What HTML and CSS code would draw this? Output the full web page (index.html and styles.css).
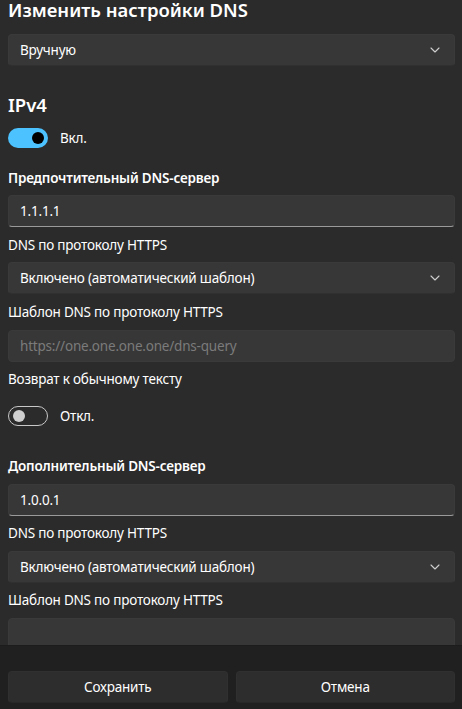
FILE: index.html
```html
<!DOCTYPE html>
<html lang="ru">
<head>
<meta charset="utf-8">
<title>Изменить настройки DNS</title>
<link rel="stylesheet" href="styles.css">
</head>
<body>
<div class="dialog">
  <main class="content">
    <h1 class="title">Изменить настройки DNS</h1>
    <div class="select first">
      <span>Вручную</span>
      <svg class="chev" width="10" height="6" viewBox="0 0 10 6"><path d="M1 1l4 4 4-4" fill="none" stroke="#cfcfcf" stroke-width="1.1" stroke-linecap="round" stroke-linejoin="round"/></svg>
    </div>

    <h2 class="section">IPv4</h2>
    <div class="toggle-row on-row">
      <span class="toggle on"><span class="knob"></span></span>
      <span class="toggle-text">Вкл.</span>
    </div>

    <div class="label bold first-label">Предпочтительный DNS-сервер</div>
    <div class="input m7"><span>1.1.1.1</span></div>

    <div class="label m8">DNS по протоколу HTTPS</div>
    <div class="select m7">
      <span>Включено (автоматический шаблон)</span>
      <svg class="chev" width="10" height="6" viewBox="0 0 10 6"><path d="M1 1l4 4 4-4" fill="none" stroke="#cfcfcf" stroke-width="1.1" stroke-linecap="round" stroke-linejoin="round"/></svg>
    </div>

    <div class="label m8">Шаблон DNS по протоколу HTTPS</div>
    <div class="input plain m8"><span class="placeholder">https://one.one.one.one/dns-query</span></div>

    <div class="label m7">Возврат к обычному тексту</div>
    <div class="toggle-row off-row">
      <span class="toggle off"><span class="knob"></span></span>
      <span class="toggle-text">Откл.</span>
    </div>

    <div class="label bold second-label">Дополнительный DNS-сервер</div>
    <div class="input m8"><span>1.0.0.1</span></div>

    <div class="label m7">DNS по протоколу HTTPS</div>
    <div class="select m8">
      <span>Включено (автоматический шаблон)</span>
      <svg class="chev" width="10" height="6" viewBox="0 0 10 6"><path d="M1 1l4 4 4-4" fill="none" stroke="#cfcfcf" stroke-width="1.1" stroke-linecap="round" stroke-linejoin="round"/></svg>
    </div>

    <div class="label m7">Шаблон DNS по протоколу HTTPS</div>
    <div class="input plain m8"></div>
  </main>
  <footer class="footer">
    <button class="btn">Сохранить</button>
    <button class="btn">Отмена</button>
  </footer>
</div>
</body>
</html>
```
FILE: styles.css
```css
* { box-sizing: border-box; }
html, body {
  margin: 0;
  padding: 0;
  background: #2b2b2b;
}
body {
  font-family: "Noto Sans", "Open Sans", sans-serif;
  font-size: 13.5px;
  letter-spacing: -0.2px;
  color: #ffffff;
  width: 462px;
  height: 709px;
  overflow: hidden;
}
.dialog {
  display: flex;
  flex-direction: column;
  height: 709px;
}
.content {
  height: 645px;
  overflow: hidden;
  padding: 0 7px 0 8px;
  display: flex;
  flex-direction: column;
  flex: none;
}
.title {
  margin: 0;
  font-size: 18.5px;
  font-weight: 600;
  line-height: 20px;
  letter-spacing: 0;
}
.select {
  height: 32px;
  background: #373737;
  border: 1px solid #3a3a3a;
  border-bottom-color: #303030;
  border-radius: 4px;
  display: flex;
  align-items: center;
  justify-content: space-between;
  padding: 0 14px 0 11px;
  flex: none;
}
.select.first { margin-top: 14px; }
.chev { display: block; }
.section {
  margin: 25px 0 0;
  font-size: 18.5px;
  font-weight: 600;
  line-height: 28px;
  letter-spacing: 0;
}
.toggle-row {
  display: flex;
  align-items: center;
  gap: 12px;
  height: 20px;
  flex: none;
}
.on-row { margin-top: 9px; }
.off-row { margin-top: 17px; }
.toggle {
  width: 40px;
  height: 20px;
  border-radius: 10px;
  display: flex;
  align-items: center;
  flex: none;
}
.toggle.on {
  background: #4cc2ff;
  justify-content: flex-end;
  padding-right: 4px;
}
.toggle.on .knob {
  width: 12px;
  height: 12px;
  border-radius: 50%;
  background: #000;
}
.toggle.off {
  border: 1px solid #c8c8c8;
  padding-left: 4px;
}
.toggle.off .knob {
  width: 12px;
  height: 12px;
  border-radius: 50%;
  background: #cfcfcf;
}
.label {
  line-height: 20px;
  flex: none;
}
.label.bold { font-weight: 600; }
.first-label { margin-top: 20px; }
.second-label { margin-top: 30px; }
.m7 { margin-top: 7px; }
.m8 { margin-top: 8px; }
.input {
  height: 32px;
  background: #373737;
  border: 1px solid #3a3a3a;
  border-bottom: 1px solid #9a9a9a;
  border-radius: 4px;
  display: flex;
  align-items: center;
  padding: 0 11px;
  flex: none;
}
.input.plain {
  border-bottom-color: #3a3a3a;
}
.placeholder { color: #7b7b7b; }
.footer {
  flex: none;
  height: 64px;
  background: #202020;
  border-top: 1px solid #1c1c1c;
  padding: 25px 7px 0 8px;
  display: grid;
  grid-template-columns: 1fr 1fr;
  column-gap: 8px;
  align-items: start;
}
.btn {
  height: 32px;
  background: #2d2d2d;
  border: 1px solid #303030;
  border-bottom-color: #282828;
  border-radius: 4px;
  color: #fff;
  font-family: inherit;
  font-size: 13.5px;
  letter-spacing: -0.2px;
  padding: 0;
}
```
